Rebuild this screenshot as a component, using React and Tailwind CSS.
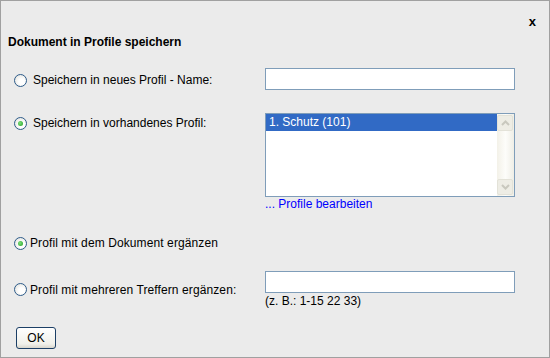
import React from 'react';

const Radio = ({ checked }) => (
  <span className="relative inline-flex h-[13px] w-[13px] flex-shrink-0 items-center justify-center rounded-full border border-[#2d5b8a] bg-[radial-gradient(circle_at_60%_60%,#ffffff_30%,#dcdcd6_100%)]">
    {checked && (
      <span className="h-[5px] w-[5px] rounded-full bg-[radial-gradient(circle_at_40%_40%,#7ee07e,#1f9e1f)]" />
    )}
  </span>
);

const TextInput = () => (
  <input
    type="text"
    className="box-border h-[22px] w-[250px] border border-[#7f9db9] bg-white px-1 outline-none"
  />
);

const ScrollArrow = ({ up }) => (
  <div className="flex h-[16px] w-[16px] items-center justify-center rounded-[2px] border border-[#e3e2d8] bg-[#eeede5]">
    <svg width="9" height="6" viewBox="0 0 9 6">
      <path
        d={up ? 'M1 5 L4.5 1.5 L8 5' : 'M1 1 L4.5 4.5 L8 1'}
        fill="none"
        stroke="#c9c8be"
        strokeWidth="2"
      />
    </svg>
  </div>
);

export default function App() {
  return (
    <div className="box-border flex h-[358px] w-[550px] flex-col border border-[#a0a0a0] bg-[#ebebeb] font-['Liberation_Sans',Arial,sans-serif] text-[12px] leading-[14px] text-black">
      {/* Close */}
      <div className="flex h-[34px] justify-end pr-[13px] pt-[14px]">
        <span className="text-[13px] font-bold leading-[13px]">x</span>
      </div>

      <h1 className="pl-[7px] text-[12px] font-bold leading-[14px]">Dokument in Profile speichern</h1>

      {/* Row 1 */}
      <div className="mt-[19px] grid grid-cols-[264px_250px]">
        <div className="flex items-center pl-[13px] pt-[2px]">
          <Radio />
          <span className="ml-[6px]">Speichern in neues Profil - Name:</span>
        </div>
        <TextInput />
      </div>

      {/* Row 2 */}
      <div className="mt-[23px] grid grid-cols-[264px_250px]">
        <div className="flex items-start pl-[13px] pt-[4px]">
          <Radio checked />
          <span className="ml-[6px] mt-[-1px]">Speichern in vorhandenes Profil:</span>
        </div>
        <div>
          <div className="box-border flex h-[84px] w-[250px] border border-[#7f9db9] bg-white">
            <div className="flex-1">
              <div className="h-[17px] bg-[#316ac5] pl-[3px] text-[12px] leading-[17px] text-white">1. Schutz (101)</div>
            </div>
            <div className="flex w-[17px] flex-col justify-between bg-[linear-gradient(to_right,#f3f1e8,#fdfdfa,#efeee6)] py-[1px]">
              <ScrollArrow up />
              <ScrollArrow />
            </div>
          </div>
          <a className="block leading-[14px] text-[#0000ff]">... Profile bearbeiten</a>
        </div>
      </div>

      {/* Row 3 */}
      <div className="mt-[25px] flex items-center pl-[13px]">
        <Radio checked />
        <span className="ml-[3px] tracking-[0.1px]">Profil mit dem Dokument ergänzen</span>
      </div>

      {/* Row 4 */}
      <div className="mt-[21px] grid grid-cols-[264px_250px]">
        <div className="flex items-center pl-[13px]">
          <Radio />
          <span className="ml-[3px] tracking-[0.1px]">Profil mit mehreren Treffern ergänzen:</span>
        </div>
        <div>
          <TextInput />
          <div className="mt-[1px] text-[12px] leading-[14px]">(z. B.: 1-15 22 33)</div>
        </div>
      </div>

      {/* OK */}
      <div className="mt-[19px] pl-[15px]">
        <button className="box-border h-[22px] w-[40px] rounded-[3px] border border-[#1c3f66] bg-[linear-gradient(to_bottom,#ffffff,#f0f0ea_80%,#d8d6cc)] text-[12px] leading-[20px]">
          OK
        </button>
      </div>
    </div>
  );
}
